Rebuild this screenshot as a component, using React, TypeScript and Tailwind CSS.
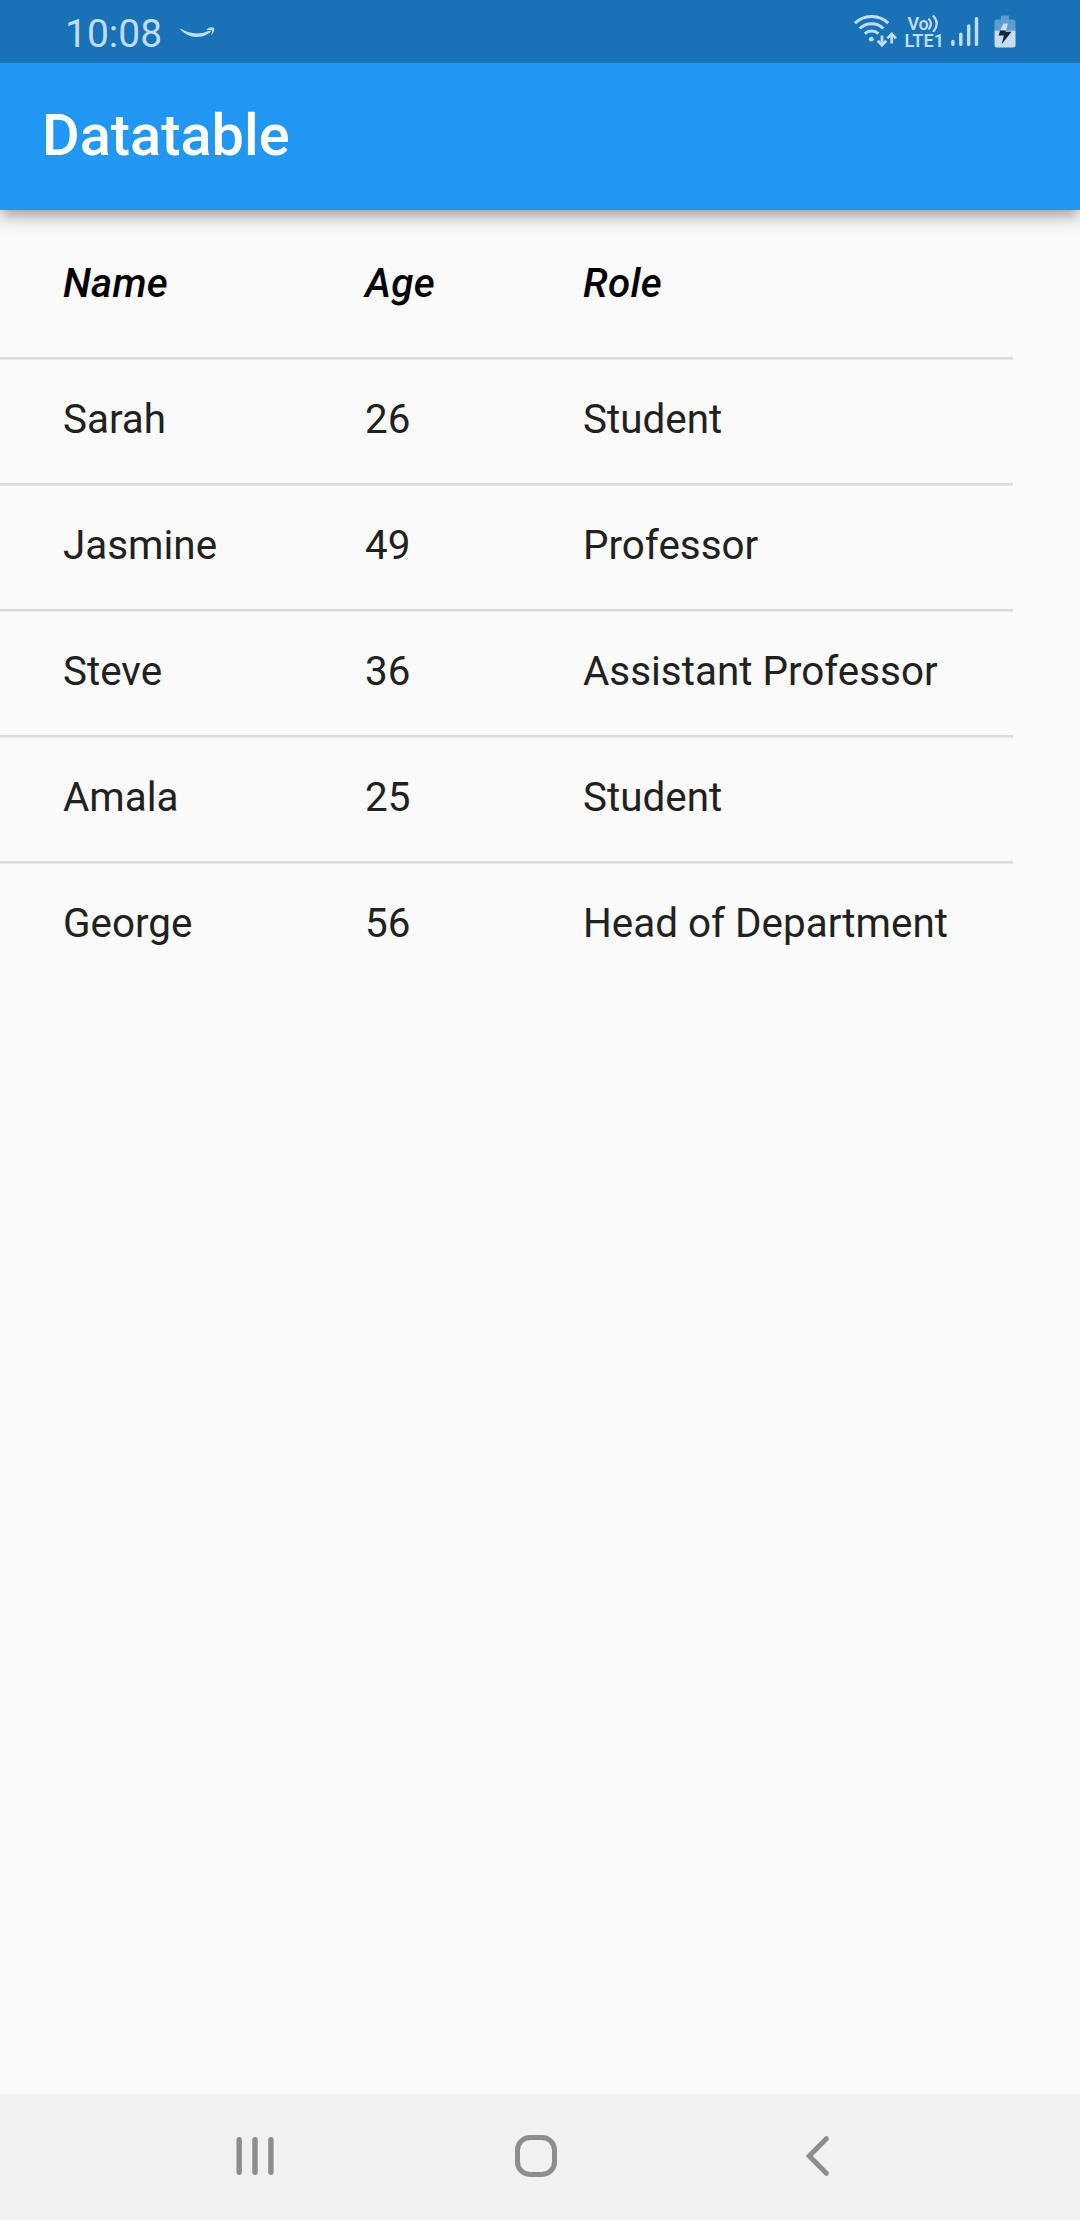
const people = [
  { name: "Sarah", age: 26, role: "Student" },
  { name: "Jasmine", age: 49, role: "Professor" },
  { name: "Steve", age: 36, role: "Assistant Professor" },
  { name: "Amala", age: 25, role: "Student" },
  { name: "George", age: 56, role: "Head of Department" },
];

function SmileArrow() {
  return (
    <svg className="ml-[18px] mt-[3px] h-[12px] w-[36px]" viewBox="0 0 36 12" fill="#bddcf5">
      <path d="M0.4 1.6 Q15 10.200 29.3 3.800 Q31.4 3.4 30.6 4.9 Q25 10 16 10 Q7.500 10 0.300 2.6 Q-0.200 1.800 0.400 1.600Z" />
      <path d="M26.800 2.200 Q30.500 -0.700 34.200 1 Q34.800 4.500 31.800 7.800 Q31.200 8 31.400 7.200 Q32.500 4 32 3.200 Q30.200 2.700 27 3.200 Z" />
    </svg>
  );
}

function WifiIcon() {
  return (
    <svg className="h-[33px] w-[43px]" viewBox="0 0 43 33" fill="none" stroke="#bddcf5">
      <g strokeWidth="3">
        <path d="M1 8.200 A24 24 0 0 1 34.300 8.200" />
        <path d="M5.800 13.500 A17 17 0 0 1 29.400 13.500" />
        <path d="M10.700 18.700 A10 10 0 0 1 24.400 18.700" />
      </g>
      <circle cx="17.300" cy="24.200" r="2.400" fill="#bddcf5" stroke="none" />
      <g strokeWidth="2.700">
        <path d="M28 20.500 V30" />
        <path d="M23.700 25.800 L28 30.200 L32.300 25.800" />
        <path d="M37.700 28.500 V19" />
        <path d="M33.400 23.400 L37.700 19 L42 23.400" />
      </g>
    </svg>
  );
}

function VolteIcon() {
  return (
    <div className="ml-[8px] flex h-[34px] w-[40px] flex-col text-[#bddcf5]">
      <div className="flex h-[17px] items-center pl-[3px]">
        <span className="text-[18px] font-semibold leading-[17px] tracking-[-0.3px]">Vo</span>
        <svg className="-ml-px h-[17px] w-[12px] shrink-0" viewBox="0 0 12 17" fill="none" stroke="#bddcf5" strokeWidth="2.200">
          <path d="M1.500 3.500 Q6.500 9 1.500 14.500" />
          <path d="M6 0.500 Q13.500 8.700 6 17" />
        </svg>
      </div>
      <span className="text-[18px] font-semibold leading-[17px] tracking-[0.1px]">LTE1</span>
    </div>
  );
}

function SignalIcon() {
  return (
    <svg className="ml-[6.500px] h-[31px] w-[28px]" viewBox="0 0 28 31" stroke="#bddcf5" strokeWidth="3.400" strokeLinecap="round">
      <path d="M1.900 25.500V28.400M9.800 18.300V28.400M17.700 10V28.400M25.500 2.800V28.400" />
    </svg>
  );
}

function BatteryIcon() {
  return (
    <svg className="ml-[15px] h-[33px] w-[22px]" viewBox="0 0 22 33">
      <path d="M7 0.500 H15 V4.500 H19 Q21.500 4.500 21.500 7 V15.500 H0.500 V7 Q0.500 4.500 3 4.500 H7Z" fill="#5e9bcf" />
      <path d="M0.500 15.500 H21.500 V30 Q21.500 32.500 19 32.500 H3 Q0.500 32.500 0.500 30Z" fill="#c6ddf0" />
      <path d="M9.500 8.500 H14 L12 15.500 H6Z" fill="#c6ddf0" />
      <path d="M6 15.500 H12 L11.500 16.800 H17.500 L7.700 29.300 L9.900 20.500 H4.700Z" fill="#12293d" />
    </svg>
  );
}

export default function App() {
  return (
    <div className="flex h-[2220px] w-[1080px] flex-col overflow-hidden bg-[#fafafa] font-['Roboto',sans-serif]">
      <header className="z-10 shrink-0 bg-[#2196f3] shadow-[0_5px_10px_-3px_rgba(0,0,0,0.2),0_10px_13px_0_rgba(0,0,0,0.14),0_3px_26px_0_rgba(0,0,0,0.12)]">
        <div className="flex h-[63px] items-center bg-[#1971b6] pl-[65px] pr-[64px]">
          <span className="mt-[4px] text-[39px] leading-[46px] text-[#bddcf5]">10:08</span>
          <SmileArrow />
          <div className="ml-auto flex items-center">
            <WifiIcon />
            <VolteIcon />
            <SignalIcon />
            <BatteryIcon />
          </div>
        </div>
        <div className="flex h-[147px] items-center px-[42px] pb-[3px]">
          <h1 className="text-[57.75px] font-medium leading-[68px] text-white">Datatable</h1>
        </div>
      </header>

      <main className="flex-1">
        <table className="w-[1013px] table-fixed border-separate border-spacing-0 text-left">
          <colgroup>
            <col className="w-[291px]" />
            <col className="w-[218px]" />
            <col className="w-[504px]" />
          </colgroup>
          <thead>
            <tr className="h-[147px] text-[40.4px] italic leading-[48px] tracking-[0.26px] text-black">
              <th className="p-0 pl-[63px] font-medium">Name</th>
              <th className="p-0 pl-[74px] font-medium">Age</th>
              <th className="p-0 pl-[74px] font-medium">Role</th>
            </tr>
          </thead>
          <tbody>
            {people.map((person) => (
              <tr
                key={person.name}
                className="h-[126px] text-[40.4px] leading-[48px] text-[#212121] *:border-t-2 *:border-[#dcdcdc] *:p-0 *:pb-[2px] *:shadow-[inset_0_1px_0_#e8e8e8]"
              >
                <td><div className="pl-[63px]">{person.name}</div></td>
                <td><div className="pl-[74px]">{person.age}</div></td>
                <td><div className="pl-[74px]">{person.role}</div></td>
              </tr>
            ))}
          </tbody>
        </table>
      </main>

      <nav className="flex h-[126px] shrink-0 items-center bg-[#f1f1f1] pb-[2px] pl-[236px]">
        <svg className="h-[42px] w-[38px]" viewBox="0 0 38 42" stroke="#8d8d8d" strokeWidth="5.400" strokeLinecap="round">
          <path d="M3.200 4V36.500M19 4V36.500M34.900 4V36.500" transform="translate(0 0.700)" />
        </svg>
        <div className="ml-[241px] h-[42px] w-[42px] rounded-[15px] border-[5px] border-[#8d8d8d]" />
        <svg className="ml-[248px] h-[42px] w-[26px]" viewBox="0 0 26 42" fill="none" stroke="#8d8d8d" strokeWidth="5" strokeLinecap="round">
          <path d="M21.400 3.700 L4.300 21 L21.400 38.300" />
        </svg>
      </nav>
    </div>
  );
}
